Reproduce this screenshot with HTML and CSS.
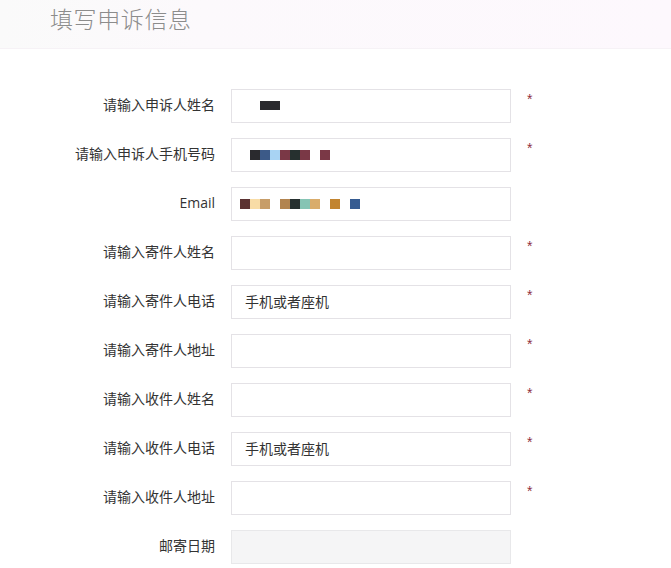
FILE: index.html
```html
<!DOCTYPE html>
<html lang="zh-CN">
<head>
<meta charset="utf-8">
<title>填写申诉信息</title>
<link rel="stylesheet" href="styles.css">
</head>
<body>
<header class="head">
  <h1 class="title">填写申诉信息</h1>
</header>
<form class="form">
  <div class="row">
    <label class="label">请输入申诉人姓名</label>
    <div class="field"><span class="mosaic m-name"><i class="px c-k"></i><i class="px c-k"></i></span></div>
    <span class="req">*</span>
  </div>
  <div class="row">
    <label class="label">请输入申诉人手机号码</label>
    <div class="field"><span class="mosaic m-phone"><i class="px c-k"></i><i class="px c-b"></i><i class="px c-lb"></i><i class="px c-m"></i><i class="px c-dg"></i><i class="px c-m"></i><i class="px"></i><i class="px c-m"></i></span></div>
    <span class="req">*</span>
  </div>
  <div class="row">
    <label class="label">Email</label>
    <div class="field"><span class="mosaic m-email"><i class="px c-br"></i><i class="px c-pe"></i><i class="px c-tn"></i><i class="px"></i><i class="px c-tb"></i><i class="px c-dg"></i><i class="px c-tl"></i><i class="px c-gd"></i><i class="px"></i><i class="px c-or"></i><i class="px"></i><i class="px c-bl"></i></span></div>
    <span class="req req-none"></span>
  </div>
  <div class="row">
    <label class="label">请输入寄件人姓名</label>
    <div class="field"></div>
    <span class="req">*</span>
  </div>
  <div class="row">
    <label class="label">请输入寄件人电话</label>
    <div class="field"><span class="val">手机或者座机</span></div>
    <span class="req">*</span>
  </div>
  <div class="row">
    <label class="label">请输入寄件人地址</label>
    <div class="field"></div>
    <span class="req">*</span>
  </div>
  <div class="row">
    <label class="label">请输入收件人姓名</label>
    <div class="field"></div>
    <span class="req">*</span>
  </div>
  <div class="row">
    <label class="label">请输入收件人电话</label>
    <div class="field"><span class="val">手机或者座机</span></div>
    <span class="req">*</span>
  </div>
  <div class="row">
    <label class="label">请输入收件人地址</label>
    <div class="field"></div>
    <span class="req">*</span>
  </div>
  <div class="row">
    <label class="label">邮寄日期</label>
    <div class="field field-disabled"></div>
    <span class="req req-none"></span>
  </div>
</form>
</body>
</html>
```
FILE: styles.css
```css
html, body {
  margin: 0;
  padding: 0;
  background: #ffffff;
  font-family: "Open Sans", "Noto Sans CJK SC", sans-serif;
  color: #333333;
}

.head {
  height: 48px;
  border-bottom: 1px solid #f6f2f6;
  background: linear-gradient(to right, #fafafa 0%, #fcf9fc 30%, #fdf8fd 100%);
  padding-left: 50px;
  box-sizing: content-box;
}

.title {
  margin: 0;
  font-family: "Noto Sans CJK SC", sans-serif;
  font-weight: 300;
  font-size: 23px;
  line-height: 36px;
  color: #8c8c8c;
  letter-spacing: 0.6px;
}

.form {
  padding-top: 40px;
}

.row {
  display: flex;
  align-items: flex-start;
  margin-bottom: 15px;
}

.label {
  width: 215px;
  flex: none;
  text-align: right;
  font-size: 14px;
  line-height: 32px;
  color: #333333;
  font-family: "Open Sans", "Noto Sans CJK SC", sans-serif;
}

.field {
  margin-left: 16px;
  width: 280px;
  height: 34px;
  box-sizing: border-box;
  border: 1px solid #e4e2e6;
  background: #ffffff;
  padding-left: 13px;
  display: flex;
  align-items: center;
  flex: none;
}

.field-disabled {
  background: #f5f5f6;
  border-color: #e8e8ea;
}

.val {
  font-family: "Noto Sans CJK SC", sans-serif;
  font-size: 14px;
  color: #333333;
  line-height: 20px;
  margin-top: -2px;
}

.req {
  margin-left: 16px;
  font-family: "Liberation Sans", sans-serif;
  font-size: 14px;
  line-height: 16px;
  padding-top: 2px;
  color: #8e2f3e;
}

.mosaic {
  display: flex;
  height: 9px;
  margin-top: -2px;
}

.m-name { margin-left: 15px; }
.m-phone { margin-left: 5px; height: 10px; margin-top: 0; }
.m-email { margin-left: -5px; height: 10px; margin-top: 0; }

.px {
  display: block;
  width: 10px;
  height: 100%;
}

.c-k  { background: #2a2a2e; }
.c-b  { background: #3c5a88; }
.c-lb { background: #a8d3f3; }
.c-m  { background: #7a3846; }
.c-dg { background: #26302f; }
.c-br { background: #5b3231; }
.c-pe { background: #f8dca6; }
.c-tn { background: #c79d68; }
.c-tb { background: #b2844f; }
.c-tl { background: #86c4b4; }
.c-gd { background: #d9ac6b; }
.c-or { background: #c2842f; }
.c-bl { background: #355b91; }
```
